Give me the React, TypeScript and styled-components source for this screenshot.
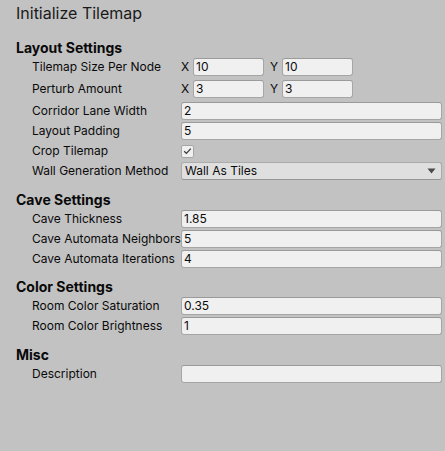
import React from "react";
import styled, { createGlobalStyle } from "styled-components";

const Global = createGlobalStyle`
  html, body {
    margin: 0;
    padding: 0;
    background: #c2c2c2;
    min-height: 100%;
  }
  body {
    font-family: Inter, "Noto Sans", "Liberation Sans", sans-serif;
    color: #090909;
  }
`;

const Window = styled.div`
  box-sizing: border-box;
  width: 445px;
  min-height: 451px;
  padding: 3px 3px 0 16px;
  display: flex;
  flex-direction: column;
`;

const Title = styled.div`
  font-size: 16px;
  line-height: 20px;
  height: 20px;
  color: #1a1a1a;
  margin-bottom: 16px;
`;

const Section = styled.section<{ $first?: boolean }>`
  display: flex;
  flex-direction: column;
  margin-top: ${(p) => (p.$first ? "0" : "10.5px")};
`;

const Header = styled.div`
  font-size: 14px;
  font-weight: 700;
  line-height: 18px;
  height: 17px;
  margin-bottom: 2px;
  color: #090909;
`;

const Rows = styled.div`
  display: flex;
  flex-direction: column;
  gap: 2px;
  padding-left: 16px;
`;

const Row = styled.div<{ $extra?: number }>`
  display: grid;
  grid-template-columns: 149px 1fr;
  align-items: center;
  height: 18px;
  margin-bottom: ${(p) => p.$extra ?? 0}px;
`;

const Label = styled.div`
  font-size: 12px;
  line-height: 18px;
  white-space: nowrap;
  overflow: hidden;
  color: #0a0a0a;
`;

const TextField = styled.div`
  box-sizing: border-box;
  height: 18px;
  background: #f0f0f0;
  border: 1px solid #a6a6a6;
  border-top-color: #9a9a9a;
  border-radius: 3px;
  padding-left: 2px;
  font-size: 12px;
  line-height: 16px;
  color: #0c0c0c;
  overflow: hidden;
  white-space: nowrap;
`;

const VectorGrid = styled.div`
  display: grid;
  grid-template-columns: repeat(3, 1fr);
  column-gap: 6px;
`;

const VectorPart = styled.div`
  display: grid;
  grid-template-columns: 12px 1fr;
  align-items: center;
`;

const AxisLabel = styled.span`
  font-size: 12px;
  line-height: 18px;
  color: #0a0a0a;
`;

const CheckBox = styled.div`
  box-sizing: border-box;
  width: 13px;
  height: 13px;
  background: #f0f0f0;
  border: 1px solid #a6a6a6;
  border-radius: 2px;
  display: flex;
  align-items: center;
  justify-content: center;
`;

const Dropdown = styled.div`
  box-sizing: border-box;
  height: 18px;
  background: #dfdfdf;
  border: 1px solid #ababab;
  border-bottom-color: #959595;
  border-radius: 3px;
  padding: 0 0 0 3px;
  display: flex;
  align-items: center;
  justify-content: space-between;
  font-size: 12px;
  line-height: 16px;
  color: #0c0c0c;
`;

const Arrow = styled.svg`
  width: 9px;
  height: 6px;
  margin-right: 5px;
`;

const Field = ({ label, value }: { label: string; value: string }) => (
  <Row>
    <Label>{label}</Label>
    <TextField>{value}</TextField>
  </Row>
);

const Vector = ({ label, x, y }: { label: string; x: string; y: string }) => (
  <Row $extra={2}>
    <Label>{label}</Label>
    <VectorGrid>
      <VectorPart>
        <AxisLabel>X</AxisLabel>
        <TextField>{x}</TextField>
      </VectorPart>
      <VectorPart>
        <AxisLabel>Y</AxisLabel>
        <TextField>{y}</TextField>
      </VectorPart>
    </VectorGrid>
  </Row>
);

export default function App() {
  return (
    <>
      <Global />
      <Window>
        <Title>Initialize Tilemap</Title>

        <Section $first>
          <Header>Layout Settings</Header>
          <Rows>
            <Vector label="Tilemap Size Per Node" x="10" y="10" />
            <Vector label="Perturb Amount" x="3" y="3" />
            <Field label="Corridor Lane Width" value="2" />
            <Field label="Layout Padding" value="5" />
            <Row>
              <Label>Crop Tilemap</Label>
              <CheckBox>
                <svg width="9" height="8" viewBox="0 0 9 8">
                  <path
                    d="M1.2 4.3 L3.4 6.4 L7.8 1.6"
                    fill="none"
                    stroke="#3a3a3a"
                    strokeWidth="1.3"
                  />
                </svg>
              </CheckBox>
            </Row>
            <Row>
              <Label>Wall Generation Method</Label>
              <Dropdown>
                <span>Wall As Tiles</span>
                <Arrow viewBox="0 0 9 6">
                  <path d="M0.5 0.5 H8.5 L4.5 5.5 Z" fill="#4a4a4a" />
                </Arrow>
              </Dropdown>
            </Row>
          </Rows>
        </Section>

        <Section>
          <Header>Cave Settings</Header>
          <Rows>
            <Field label="Cave Thickness" value="1.85" />
            <Field label="Cave Automata Neighbors" value="5" />
            <Field label="Cave Automata Iterations" value="4" />
          </Rows>
        </Section>

        <Section>
          <Header>Color Settings</Header>
          <Rows>
            <Field label="Room Color Saturation" value="0.35" />
            <Field label="Room Color Brightness" value="1" />
          </Rows>
        </Section>

        <Section>
          <Header>Misc</Header>
          <Rows>
            <Field label="Description" value="" />
          </Rows>
        </Section>
      </Window>
    </>
  );
}
